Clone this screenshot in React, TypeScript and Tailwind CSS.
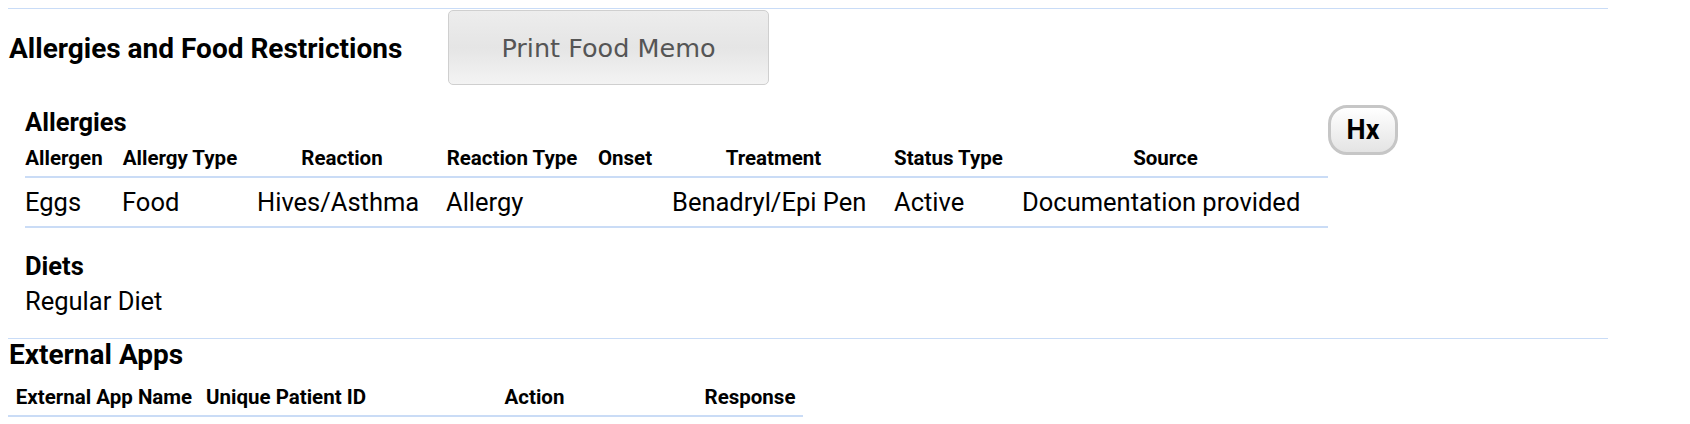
import React from 'react';

const allergyCols = [97, 135, 189, 151, 75, 222, 128, 306];
const allergyHeads = ['Allergen', 'Allergy Type', 'Reaction', 'Reaction Type', 'Onset', 'Treatment', 'Status Type', 'Source'];
const allergyRow = ['Eggs', 'Food', 'Hives/Asthma', 'Allergy', '', 'Benadryl/Epi Pen', 'Active', 'Documentation provided'];

const appCols = [192, 172, 325, 106];
const appHeads = ['External App Name', 'Unique Patient ID', 'Action', 'Response'];

export default function App() {
  return (
    <div className="w-[1690px] h-[424px] overflow-hidden bg-white text-black font-['Roboto',sans-serif]">
      <div className="ml-[8px] w-[1600px] pt-[8px]">
        <div className="h-px bg-[#c9dcf7]" />

        {/* section header */}
        <div className="flex items-center h-[76px]">
          <h2 className="w-[440px] pl-[1px] pt-[3px] text-[28px] font-bold leading-[34px]">
            Allergies and Food Restrictions
          </h2>
          <button className="w-[321px] h-[75px] pt-[2px] rounded-[5px] border border-[#cfcfcf] bg-gradient-to-b from-[#ededed] via-[#e5e5e5] to-[#f3f3f3] text-[#555] text-[25.5px] font-['DejaVu_Sans',sans-serif]">
            Print Food Memo
          </button>
        </div>

        {/* allergies */}
        <div className="flex items-start mt-[22px] pl-[17px]">
          <div className="w-[1303px]">
            <h3 className="mb-[3px] text-[25.5px] font-bold leading-[30px]">Allergies</h3>
            <table className="table-fixed w-[1303px] border-collapse">
              <colgroup>
                {allergyCols.map((w, i) => (
                  <col key={i} style={{ width: w }} />
                ))}
              </colgroup>
              <thead>
                <tr className="h-[37px] border-b-2 border-[#cadcf6]">
                  {allergyHeads.map((h) => (
                    <th key={h} className="pr-[19px] text-center text-[20.5px] font-bold whitespace-nowrap">
                      {h}
                    </th>
                  ))}
                </tr>
              </thead>
              <tbody>
                <tr className="h-[50px] border-b-2 border-[#cadcf6]">
                  {allergyRow.map((c, i) => (
                    <td key={i} className="pr-[20px] text-left text-[25.5px] whitespace-nowrap">
                      {c}
                    </td>
                  ))}
                </tr>
              </tbody>
            </table>
          </div>
          <button className="-mt-[2px] w-[70px] h-[50px] rounded-[19px] border-[3px] border-[#c6c6c6] bg-gradient-to-b from-white to-[#e4e4e4] text-[27px] font-bold shadow-[inset_0_1px_0_#fff]">
            Hx
          </button>
        </div>

        {/* diets */}
        <div className="mt-[22px] pl-[17px]">
          <h3 className="text-[25.5px] font-bold leading-[32px]">Diets</h3>
          <p className="mt-[3px] text-[25.5px] leading-[32px]">Regular Diet</p>
        </div>

        <div className="mt-[21px] h-px bg-[#c9dcf7]" />

        {/* external apps */}
        <h2 className="pl-[1px] text-[28px] font-bold leading-[32px]">External Apps</h2>
        <table className="table-fixed w-[795px] border-collapse mt-[8px]">
          <colgroup>
            {appCols.map((w, i) => (
              <col key={i} style={{ width: w }} />
            ))}
          </colgroup>
          <thead>
            <tr className="h-[37px] border-b-2 border-[#cadcf6]">
              {appHeads.map((h) => (
                <th key={h} className="px-[6px] text-center text-[20.5px] font-bold whitespace-nowrap">
                  {h}
                </th>
              ))}
            </tr>
          </thead>
        </table>
      </div>
    </div>
  );
}
